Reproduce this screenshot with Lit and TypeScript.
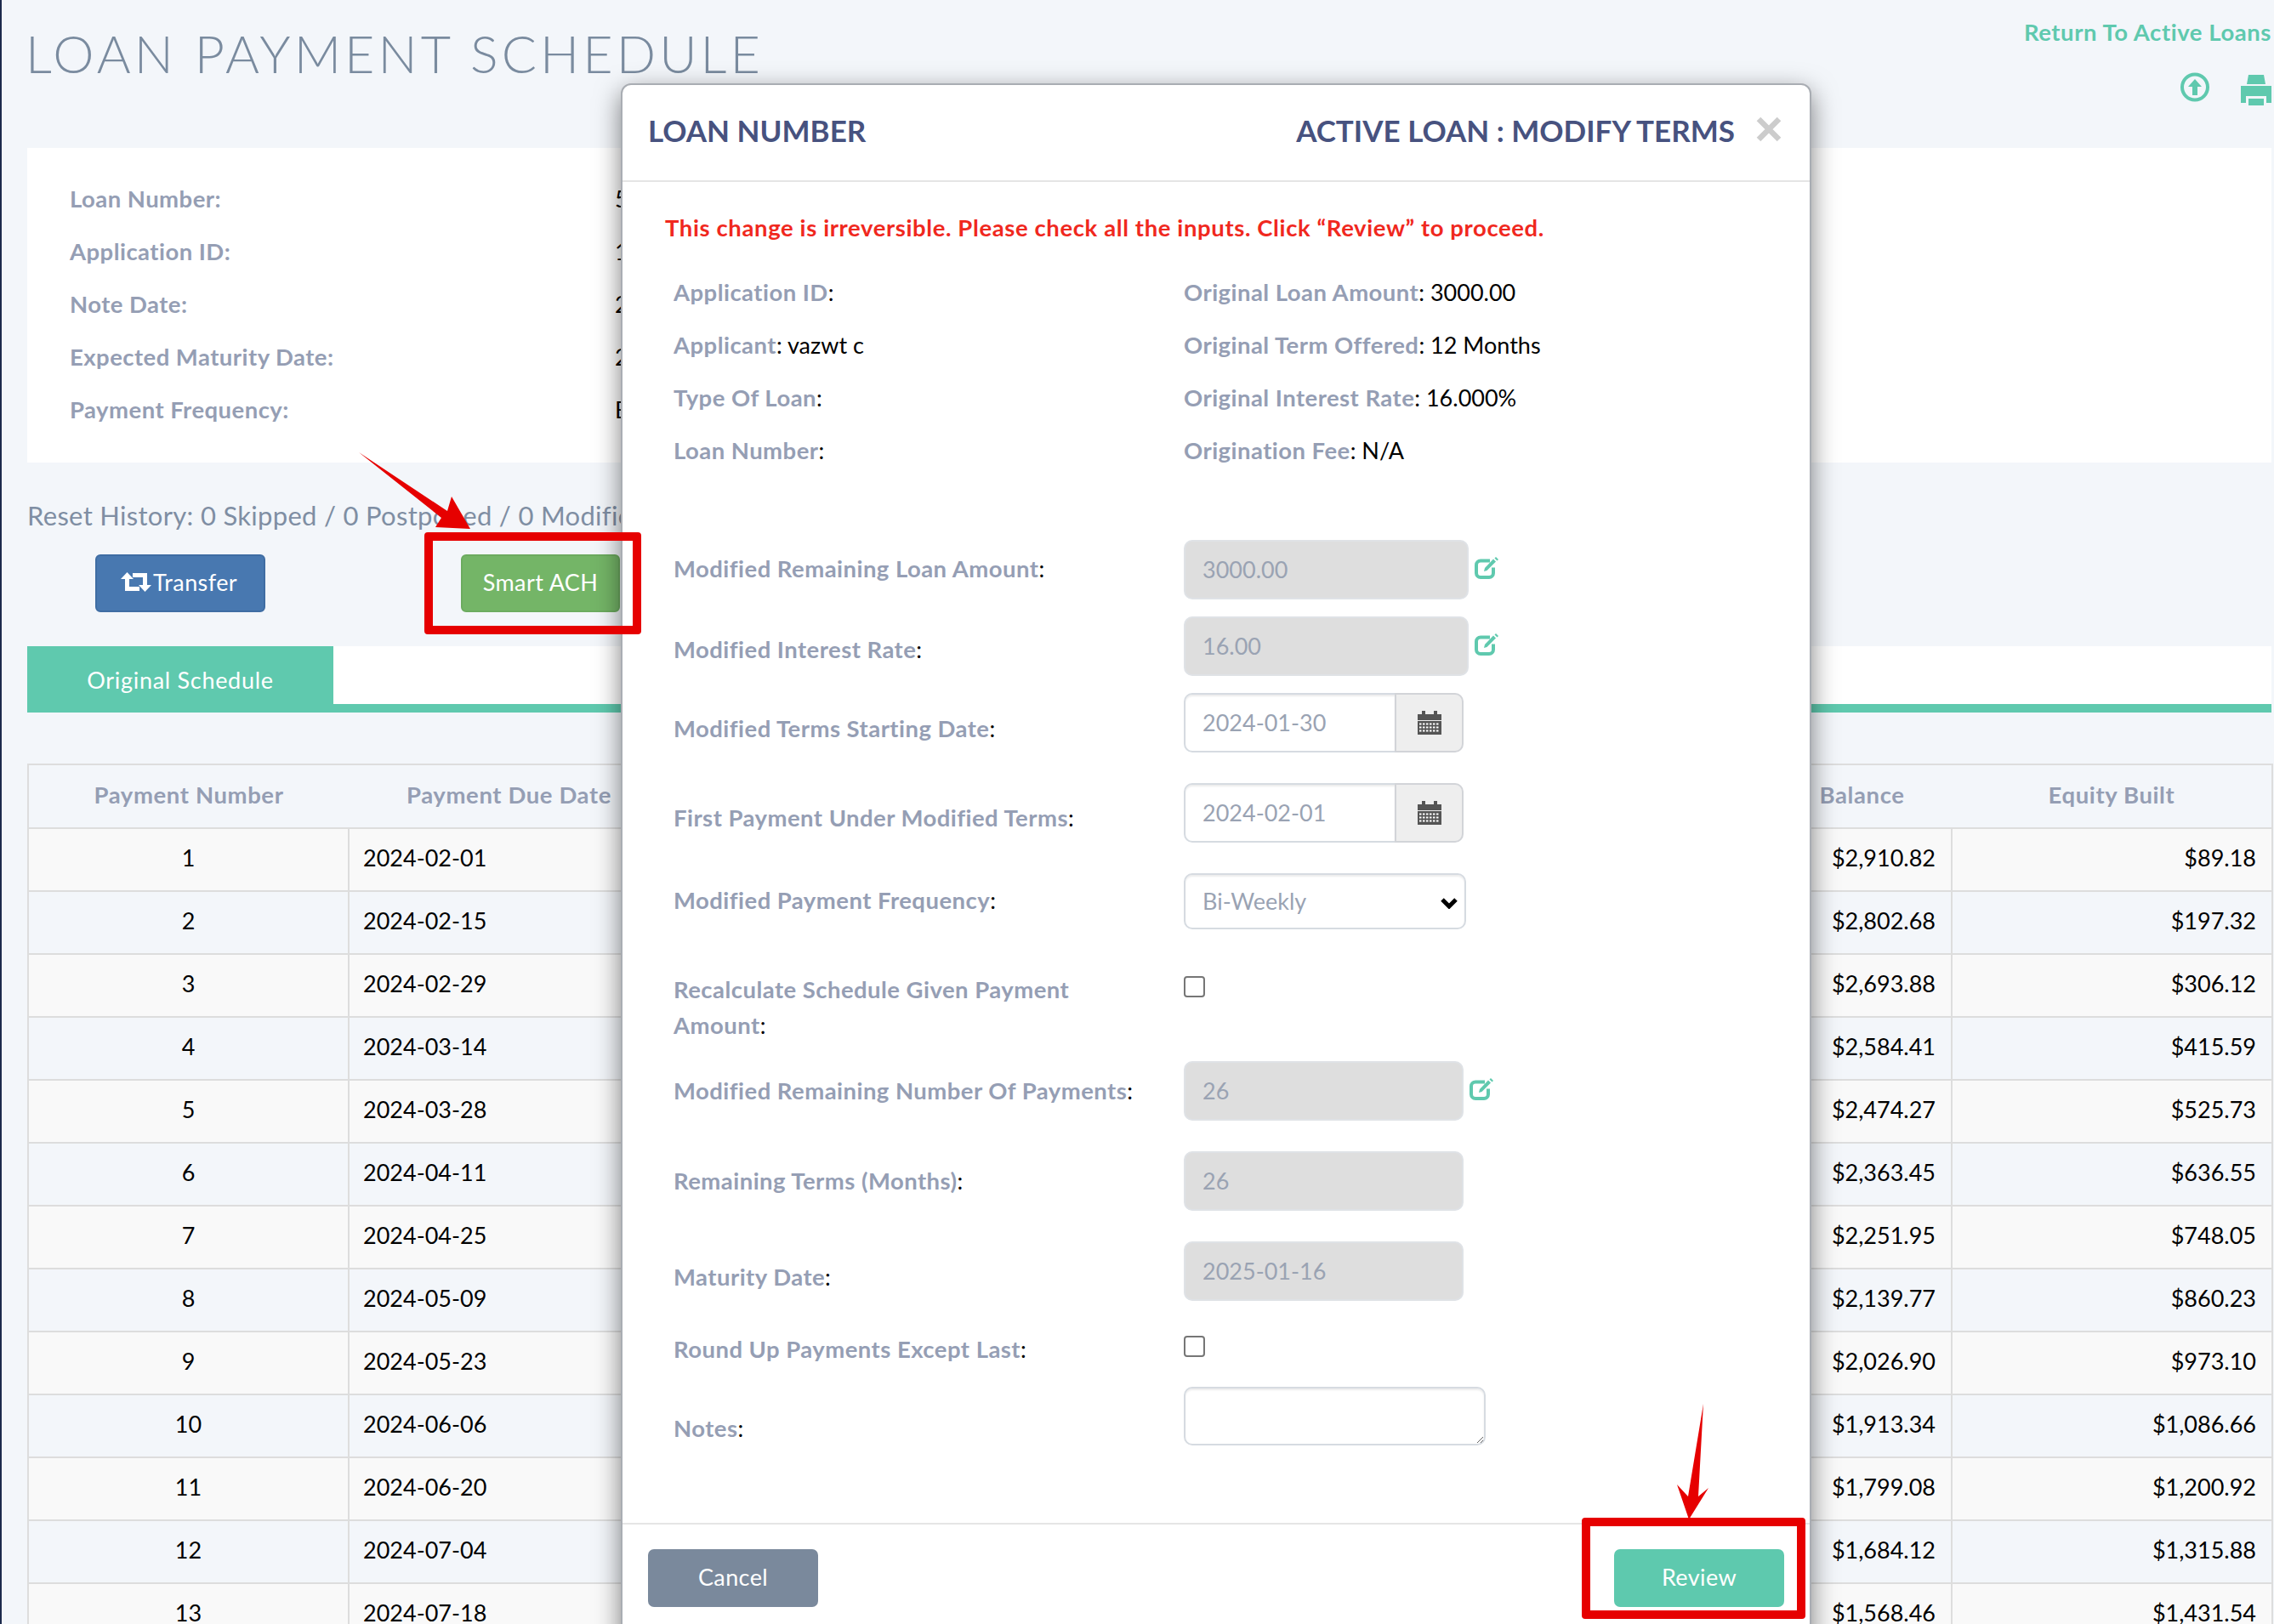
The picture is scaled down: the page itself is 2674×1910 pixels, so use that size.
import { LitElement, html, css, svg } from "lit";
import { customElement } from "lit/decorators.js";
import { styleMap } from "lit/directives/style-map.js";

const SCHEDULE: [string, string, string][] = [
  ["2024-02-01", "$2,910.82", "$89.18"],
  ["2024-02-15", "$2,802.68", "$197.32"],
  ["2024-02-29", "$2,693.88", "$306.12"],
  ["2024-03-14", "$2,584.41", "$415.59"],
  ["2024-03-28", "$2,474.27", "$525.73"],
  ["2024-04-11", "$2,363.45", "$636.55"],
  ["2024-04-25", "$2,251.95", "$748.05"],
  ["2024-05-09", "$2,139.77", "$860.23"],
  ["2024-05-23", "$2,026.90", "$973.10"],
  ["2024-06-06", "$1,913.34", "$1,086.66"],
  ["2024-06-20", "$1,799.08", "$1,200.92"],
  ["2024-07-04", "$1,684.12", "$1,315.88"],
  ["2024-07-18", "$1,568.46", "$1,431.54"],
];

const SUMMARY: [string, string][] = [
  ["Loan Number:", "5"],
  ["Application ID:", "1"],
  ["Note Date:", "2024-01-30"],
  ["Expected Maturity Date:", "2025-01-16"],
  ["Payment Frequency:", "Bi-Weekly"],
];

const INFO: [string, string, string, string][] = [
  ["Application ID", "", "Original Loan Amount", "3000.00"],
  ["Applicant", "vazwt c", "Original Term Offered", "12 Months"],
  ["Type Of Loan", "", "Original Interest Rate", "16.000%"],
  ["Loan Number", "", "Origination Fee", "N/A"],
];

const editIcon = html`<svg class="edit" viewBox="0 0 29 26" aria-hidden="true">
  <path d="M18 4.500H7a5 5 0 0 0-5 5v9.500a5 5 0 0 0 5 5h10a5 5 0 0 0 5-5v-6.500" fill="none" stroke="currentColor" stroke-width="4"/>
  <path d="M11 17l1-4L22 2.500l3 3L14.500 16z" fill="currentColor"/>
  <path d="M25 0l3 3-1.500 1.500-3-3z" fill="currentColor"/>
</svg>`;

const calendarIcon = html`<svg class="cal" viewBox="0 0 28 28" aria-hidden="true">
  <path d="M0 4h5V0h4v4h10V0h4v4h5v7H0zM0 12h28v16H0z" fill="#555"/>
  ${[15.5, 19.5, 23.5].map(
    (y) => svg`<line x1="2" x2="26" y1=${y} y2=${y} stroke="#fff" stroke-width="2" stroke-dasharray="2.500 1.500"/>`
  )}
</svg>`;

@customElement("app-root")
export class AppRoot extends LitElement {
  static styles = css`
    :host {
      display: block;
      position: relative;
      width: 2674px;
      height: 1910px;
      overflow: hidden;
      background: #f3f6fa;
      font-family: "Lato", "Liberation Sans", sans-serif;
      font-size: 27px;
      color: #000;
    }
    * { box-sizing: border-box; }
    .page {
      height: 100%;
      padding: 0 3px 0 32px;
      border-left: 2px solid #1c2a4c;
    }
    .page-inner { margin-left: -2px; }
    .head {
      height: 174px;
      display: flex;
      justify-content: space-between;
    }
    h1 {
      margin: 32px 0 0 -2px;
      font-size: 61px;
      line-height: 62px;
      font-weight: 300;
      letter-spacing: 4.100px;
      color: #7a8b9f;
    }
    .tools {
      display: flex;
      flex-direction: column;
      align-items: flex-end;
      color: #5fc9ae;
    }
    .back {
      margin-top: 18px;
      line-height: 40px;
      font-size: 27.500px;
      letter-spacing: 0.550px;
      font-weight: 700;
      color: #5fc9ae;
    }
    .tool-icons {
      display: flex;
      gap: 36px;
      margin-top: 27px;
      align-items: flex-start;
    }
    .up { width: 36px; height: 35px; }
    .print { width: 36px; height: 36px; margin-top: 3px; }
    .card {
      height: 370px;
      background: #fff;
      padding: 29px 0 0 50px;
    }
    .sum-row {
      display: grid;
      grid-template-columns: 641px 1fr;
      height: 62px;
      line-height: 62px;
    }
    .lbl { color: #959eb4; font-weight: 700; font-size: 27.500px; letter-spacing: 0.450px; }
    .history {
      margin-top: 40px;
      line-height: 44px;
      font-size: 31px;
      letter-spacing: 0.300px;
      color: #7f8ea3;
      white-space: nowrap;
    }
    .actions {
      display: flex;
      gap: 230px;
      margin: 24px 0 0 80px;
    }
    .btn {
      height: 68px;
      display: flex;
      align-items: center;
      justify-content: center;
      gap: 2px;
      border-radius: 6px;
      color: #fff;
      letter-spacing: 0.400px;
      padding-bottom: 4px;
    }
    .transfer { width: 200px; background: #4878b0; border: 2px solid #3f6da3; padding-right: 3px; }
    .ach { width: 187px; background: #74b567; border: 2px solid #6cab5f; }
    .retweet { width: 36px; height: 23px; }
    .tabs {
      margin-top: 40px;
      height: 78px;
      background: #fff;
      border-bottom: 10px solid #5fc9ae;
      display: flex;
    }
    .tab {
      width: 360px;
      height: 78px;
      background: #5fc9ae;
      color: #fff;
      text-align: center;
      line-height: 80px;
      letter-spacing: 0.700px;
    }
    table {
      margin-top: 60px;
      width: 2641px;
      table-layout: fixed;
      border-collapse: collapse;
    }
    th {
      height: 75px;
      padding: 0 0 5px;
      color: #959eb4;
      font-weight: 700;
      font-size: 27.500px;
      letter-spacing: 0.600px;
      background: #f3f6fa;
      border-top: 2px solid #ddd;
      border-bottom: 2px solid #ddd;
      white-space: nowrap;
    }
    th.wide { word-spacing: 14px; padding-right: 14px; }
    th:first-child { border-left: 2px solid #ddd; }
    th:last-child { border-right: 2px solid #ddd; }
    td {
      height: 74px;
      padding: 0 16px 5px;
      border: 2px solid #ddd;
    }
    td.r { padding-right: 18px; }
    tr:nth-child(odd) td { background: #f9f9f9; }
    tr:nth-child(even) td { background: #f3f6fa; }
    .c { text-align: center; }
    .r { text-align: right; }

    .modal {
      position: absolute;
      left: 730px;
      top: 98px;
      width: 1400px;
      height: 1860px;
      background: #fff;
      border: 2px solid #a9adb3;
      border-radius: 12px;
      box-shadow: 0 10px 30px rgba(0, 0, 0, 0.5);
    }
    .m-head {
      height: 114px;
      border-bottom: 2px solid #e5e5e5;
      padding: 0 33px 6px 30px;
      display: flex;
      align-items: center;
      font-size: 35px;
      font-weight: 700;
      color: #47527f;
    }
    .m-head span:first-of-type { flex: 1; }
    .close { width: 30px; height: 30px; margin: -2px 0 0 25px; }
    .warn {
      margin: 33px 0 0 50px;
      line-height: 42px;
      font-weight: 700;
      font-size: 27.500px;
      letter-spacing: 0.600px;
      color: #f0281e;
    }
    .info { margin: 24px 0 0 60px; }
    .info-row {
      display: grid;
      grid-template-columns: 600px 1fr;
      height: 62px;
      line-height: 62px;
    }
    .info-left { width: 224px; overflow: hidden; white-space: nowrap; }
    .form { margin: 74px 0 0 60px; }
    .f-row { display: flex; align-items: flex-start; }
    .f-label {
      width: 600px;
      flex: none;
      padding-right: 40px;
      line-height: 42px;
    }
    input[type="text"], select, textarea {
      font: inherit;
      color: #9aa3b3;
      background: #fff;
      border: 2px solid #d6dbe1;
      border-radius: 10px;
      padding: 0 20px 2px;
      outline: none;
      display: block;
      margin: 0;
    }
    input[type="text"] { height: 70px; }
    input:disabled { background: #dedede; border-color: #dfe2e6; -webkit-text-fill-color: #9aa3b3; opacity: 1; }
    .w335 { width: 335px; }
    .w329 { width: 329px; }
    .edit-wrap { display: flex; align-items: flex-start; gap: 7px; color: #5fc9ae; }
    .edit { width: 29px; height: 26px; margin-top: 20px; flex: none; }
    .date { display: flex; width: 329px; height: 70px; }
    .date input {
      width: 248px;
      border-radius: 10px 0 0 10px;
      border-right: none;
      box-shadow: inset 0 2px 2px rgba(0, 0, 0, 0.075);
    }
    .addon {
      width: 81px;
      background: #eee;
      border: 2px solid #d2d4d8;
      border-radius: 0 10px 10px 0;
      display: flex;
      align-items: center;
      justify-content: center;
    }
    .cal { width: 28px; height: 28px; }
    .sel { position: relative; width: 332px; height: 66px; }
    select {
      appearance: none;
      width: 332px;
      height: 66px;
      box-shadow: inset 0 2px 2px rgba(0, 0, 0, 0.075);
    }
    .chev { position: absolute; right: 10px; top: 29px; width: 20px; height: 13px; pointer-events: none; }
    input[type="checkbox"] {
      appearance: none;
      width: 25px;
      height: 25px;
      margin: 5px 0 0;
      display: block;
      background: #fff;
      border: 2px solid #767676;
      border-radius: 4px;
    }
    textarea {
      width: 355px;
      height: 69px;
      resize: both;
      box-shadow: inset 0 2px 2px rgba(0, 0, 0, 0.075);
    }
    .m-foot {
      position: absolute;
      left: 0;
      right: 0;
      top: 1691px;
      border-top: 2px solid #e5e5e5;
      padding: 29px 30px 0;
      display: flex;
      justify-content: space-between;
    }
    .m-btn {
      width: 200px;
      height: 68px;
      border-radius: 7px;
      color: #fff;
      letter-spacing: 0.400px;
      padding-bottom: 4px;
      display: flex;
      align-items: center;
      justify-content: center;
    }
    .cancel { background: #7a899c; }
    .review { background: #5ec9ae; }

    .marks { position: absolute; inset: 0; width: 2674px; height: 1910px; pointer-events: none; }
    .mark {
      position: absolute;
      border: 10px solid #e60000;
      border-radius: 4px;
    }
    .mark-ach { left: 499px; top: 626px; width: 255px; height: 120px; }
    .mark-review { left: 1860px; top: 1785px; width: 263px; height: 119px; }
  `;

  render() {
    return html`
      <div class="page">
        <div class="page-inner">
          <div class="head">
            <h1>LOAN PAYMENT SCHEDULE</h1>
            <div class="tools">
              <div class="back">Return To Active Loans</div>
              <div class="tool-icons">
                <svg class="up" viewBox="0 0 36 35" aria-hidden="true">
                  <circle cx="18" cy="17.500" r="15" fill="none" stroke="currentColor" stroke-width="4"/>
                  <path d="M18 8l8 9h-5v10h-6V17h-5z" fill="currentColor"/>
                </svg>
                <svg class="print" viewBox="0 0 36 36" aria-hidden="true">
                  <path d="M9 0H27L29 11H7ZM0 13H36V33H30V25H6V33H0ZM9 28H27V36H9Z" fill="currentColor"/>
                </svg>
              </div>
            </div>
          </div>

          <div class="card">
            ${SUMMARY.map(
              ([k, v]) => html`<div class="sum-row"><span class="lbl">${k}</span><span>${v}</span></div>`
            )}
          </div>

          <div class="history">Reset History: 0 Skipped / 0 Postponed / 0 Modified</div>

          <div class="actions">
            <div class="btn transfer">
              <svg class="retweet" viewBox="0 0 36 23" aria-hidden="true">
                <path d="M0 8L7.500 0L15 8H10V17H22V22H5V8Z" fill="#fff"/>
                <path d="M36 15L28.500 23L21 15H26V6H14V1H31V15Z" fill="#fff"/>
              </svg>
              <span>Transfer</span>
            </div>
            <div class="btn ach">Smart ACH</div>
          </div>

          <div class="tabs"><div class="tab">Original Schedule</div></div>

          <table>
            <thead>
              <tr>
                <th>Payment Number</th>
                <th>Payment Due Date</th>
                <th></th>
                <th></th>
                <th></th>
                <th class="wide">Outstanding Balance</th>
                <th>Equity Built</th>
              </tr>
            </thead>
            <tbody>
              ${SCHEDULE.map(
                ([d, b, e], i) => html`<tr>
                  <td class="c">${i + 1}</td>
                  <td>${d}</td>
                  <td></td>
                  <td></td>
                  <td></td>
                  <td class="r">${b}</td>
                  <td class="r">${e}</td>
                </tr>`
              )}
            </tbody>
          </table>
        </div>
      </div>

      <div class="modal">
        <div class="m-head">
          <span>LOAN NUMBER</span>
          <span>ACTIVE LOAN : MODIFY TERMS</span>
          <svg class="close" viewBox="0 0 30 30" aria-hidden="true">
            <path d="M3 3L27 27M27 3L3 27" stroke="#ccc" stroke-width="6.500"/>
          </svg>
        </div>
        <div class="warn">This change is irreversible. Please check all the inputs. Click “Review” to proceed.</div>
        <div class="info">
          ${INFO.map(
            ([a, av, b, bv]) => html`<div class="info-row">
              <div class="info-left"><span class="lbl">${a}</span>: ${av}</div>
              <div><span class="lbl">${b}</span>: ${bv}</div>
            </div>`
          )}
        </div>
        <div class="form">
          ${this.row("Modified Remaining Loan Amount", 90, 13, html`<div class="edit-wrap"><input type="text" class="w335" disabled value="3000.00" />${editIcon}</div>`)}
          ${this.row("Modified Interest Rate", 90, 18, html`<div class="edit-wrap"><input type="text" class="w335" disabled value="16.00" />${editIcon}</div>`)}
          ${this.row("Modified Terms Starting Date", 106, 21, this.dateField("2024-01-30"))}
          ${this.row("First Payment Under Modified Terms", 106, 20, this.dateField("2024-02-01"))}
          ${this.row("Modified Payment Frequency", 116, 11, html`<div class="sel">
            <select><option>Bi-Weekly</option></select>
            <svg class="chev" viewBox="0 0 20 13" aria-hidden="true"><path d="M2 2L10 10L18 2" fill="none" stroke="#000" stroke-width="5"/></svg>
          </div>`)}
          ${this.row("Recalculate Schedule Given Payment Amount", 105, 0, html`<input type="checkbox" />`)}
          ${this.row("Modified Remaining Number Of Payments", 106, 14, html`<div class="edit-wrap"><input type="text" class="w329" disabled value="26" />${editIcon}</div>`)}
          ${this.row("Remaining Terms (Months)", 106, 14, html`<input type="text" class="w329" disabled value="26" />`)}
          ${this.row("Maturity Date", 106, 21, html`<input type="text" class="w329" disabled value="2025-01-16" />`)}
          ${this.row("Round Up Payments Except Last", 65, 0, html`<input type="checkbox" />`)}
          ${this.row("Notes", 150, 28, html`<textarea></textarea>`)}
        </div>
        <div class="m-foot">
          <div class="m-btn cancel">Cancel</div>
          <div class="m-btn review">Review</div>
        </div>
      </div>

      <div class="mark mark-ach"></div>
      <div class="mark mark-review"></div>
      <svg class="marks" viewBox="0 0 2674 1910" aria-hidden="true">
        <polygon fill="#e60000" points="422,532 526,601 531,584 553,622 512,620 519,609" />
        <polygon fill="#e60000" points="2003,1651 1997,1760 2009,1750 1986,1787 1972,1746 1985,1760" />
      </svg>
    `;
  }

  private row(label: string, height: number, labelTop: number, control: unknown) {
    return html`<div class="f-row" style=${styleMap({ height: `${height}px` })}>
      <div class="f-label" style=${styleMap({ paddingTop: `${labelTop}px` })}><span class="lbl">${label}</span>:</div>
      ${control}
    </div>`;
  }

  private dateField(value: string) {
    return html`<div class="date">
      <input type="text" value=${value} />
      <div class="addon">${calendarIcon}</div>
    </div>`;
  }
}
